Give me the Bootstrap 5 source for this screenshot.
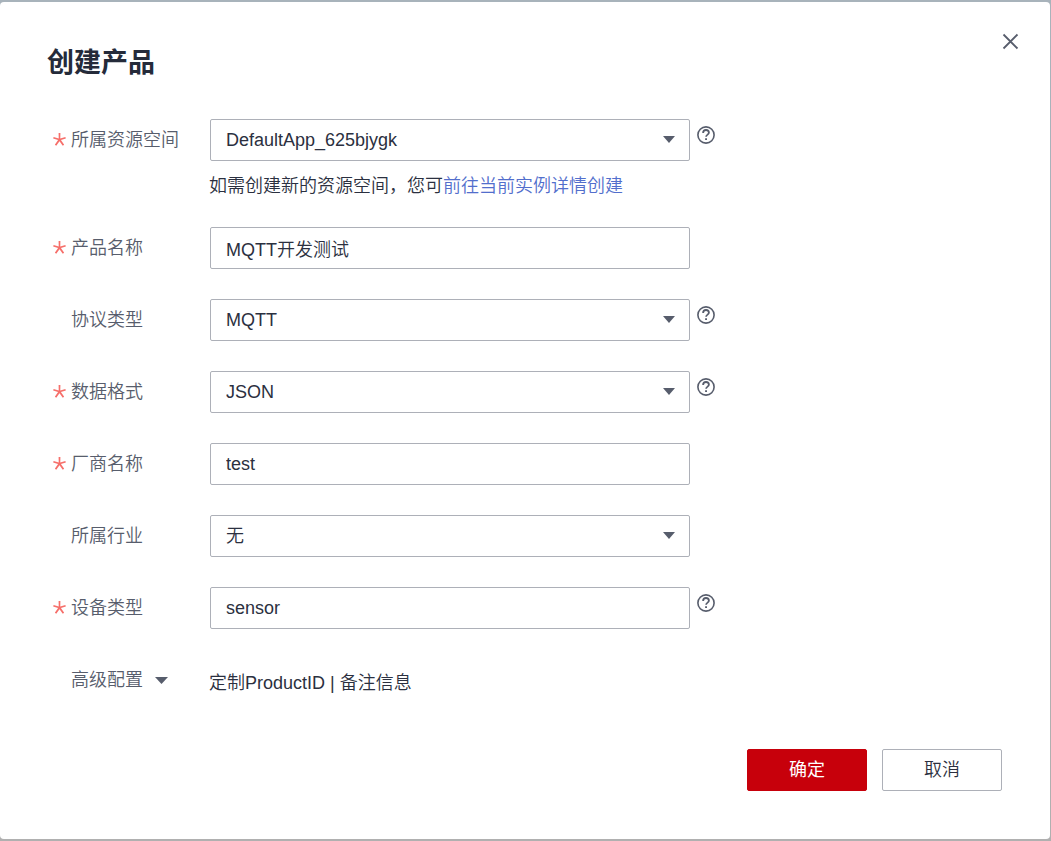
<!DOCTYPE html>
<html lang="zh-CN">
<head>
<meta charset="utf-8">
<meta name="viewport" content="width=device-width, initial-scale=1">
<title>创建产品</title>
<link href="https://cdn.jsdelivr.net/npm/bootstrap@5.3.0/dist/css/bootstrap.min.css" rel="stylesheet">
<style>
  :root { --ink: #2b3040; --label: #575d6c; --line: #adb0b8; }
  body {
    background: linear-gradient(#a8b3bb 0 50%, #b0b0b0 50%);
    color: var(--ink);
    font: 350 18px/26px "Liberation Sans", "Noto Sans CJK SC", sans-serif;
  }
  .plain { border: 0; background: none; padding: 0; font: inherit; color: inherit; }
  .dialog { margin: 2px 1px 2px 0; padding: 42px 48px 48px; border-radius: 4px; background: #fff; min-height: calc(100vh - 4px); position: relative; }
  .dialog-title { font-size: 27px; line-height: 38px; font-weight: 700; margin: 0 0 37px -1px; color: #252b3a; }
  .dialog-close { position: absolute; top: 31px; right: 31px; color: var(--label); line-height: 0; }
  .form-line { display: grid; grid-template-columns: 162px minmax(0, 480px) 18px; margin-bottom: 30px; }
  .form-line > .help { margin-left: 7px; margin-top: 7px; }
  .field-label { color: var(--label); padding: 8px 0 8px 23px; position: relative; }
  .required::before { content: ""; position: absolute; left: 5px; top: 14px; width: 13px; height: 13px; background: #f66f6a;
    clip-path: polygon(43% 0, 57% 0, 56% 42%, 95% 30%, 99% 42%, 61% 54%, 86% 90%, 75% 98%, 50% 64%, 25% 98%, 14% 90%, 39% 54%, 1% 42%, 5% 30%, 44% 42%); }
  .field-box, .field-box:focus { height: 42px; padding: 0 15px; border: 1px solid var(--line); border-radius: 2px; color: var(--ink);
    font-size: 18px; font-weight: 350; line-height: 26px; background-color: #fff; box-shadow: none; }
  .form-select.field-box { padding-right: 40px; background-position: right 14px top 16px; background-size: 12px 7px;
    background-image: url("data:image/svg+xml,%3Csvg xmlns='http://www.w3.org/2000/svg' viewBox='0 0 12 7'%3E%3Cpath fill='%23575d6c' d='M0 0h12L6 7z'/%3E%3C/svg%3E"); }
  .hint { margin: 12px 0 -2px -1px; }
  .hint a { color: #526ecc; text-decoration: none; }
  .summary { margin: 11px 0 0 -1px; }
  .help { color: var(--label); line-height: 0; width: 18px; height: 18px; }
  .help svg, .dialog-close svg { display: block; }
  .action { width: 120px; height: 42px; border-radius: 2px; font-size: 18px; line-height: 26px; padding: 0; }
  .action-ok, .action-ok:hover { background: #c7000b; border-color: #c7000b; color: #fff; font-weight: 400; }
  .action-cancel, .action-cancel:hover { background: #fff; border-color: var(--line); color: var(--ink); font-weight: 350; }
  .actions { gap: 15px; }
</style>
</head>
<body>
<svg class="d-none">
  <symbol id="help-icon" viewBox="0 0 18 18">
    <circle cx="9" cy="9" r="8.1" fill="none" stroke="currentColor" stroke-width="1.6"/>
    <path d="M6.100 7C6.100 5.100 7.300 4 9 4s2.900 1.100 2.900 2.700c0 1.900-2.800 2-2.800 4.100" fill="none" stroke="currentColor" stroke-width="1.8"/>
    <path d="M8.100 12.200h1.900v1.800H8.100z" fill="currentColor"/>
  </symbol>
</svg>
<main class="dialog d-flex flex-column" role="dialog" aria-labelledby="dialog-title">
  <h1 class="dialog-title" id="dialog-title">创建产品</h1>
  <button type="button" class="plain dialog-close" aria-label="关闭">
    <svg width="17" height="17" viewBox="0 0 17 17" fill="none" stroke="currentColor" stroke-width="1.8"><path d="M1.500 1.500l14 14M15.500 1.500l-14 14"/></svg>
  </button>
  <form id="product">
    <div class="form-line">
      <label class="field-label required" for="space">所属资源空间</label>
      <div>
        <select class="form-select field-box" id="space"><option>DefaultApp_625bjygk</option></select>
        <p class="hint">如需创建新的资源空间，您可<a href="#">前往当前实例详情创建</a></p>
      </div>
      <button type="button" class="plain help" aria-label="帮助"><svg width="18" height="18"><use href="#help-icon"/></svg></button>
    </div>
    <div class="form-line">
      <label class="field-label required" for="name">产品名称</label>
      <input class="form-control field-box" id="name" type="text" value="MQTT开发测试">
    </div>
    <div class="form-line">
      <label class="field-label" for="protocol">协议类型</label>
      <select class="form-select field-box" id="protocol"><option>MQTT</option></select>
      <button type="button" class="plain help" aria-label="帮助"><svg width="18" height="18"><use href="#help-icon"/></svg></button>
    </div>
    <div class="form-line">
      <label class="field-label required" for="format">数据格式</label>
      <select class="form-select field-box" id="format"><option>JSON</option></select>
      <button type="button" class="plain help" aria-label="帮助"><svg width="18" height="18"><use href="#help-icon"/></svg></button>
    </div>
    <div class="form-line">
      <label class="field-label required" for="vendor">厂商名称</label>
      <input class="form-control field-box" id="vendor" type="text" value="test">
    </div>
    <div class="form-line">
      <label class="field-label" for="industry">所属行业</label>
      <select class="form-select field-box" id="industry"><option>无</option></select>
    </div>
    <div class="form-line">
      <label class="field-label required" for="device">设备类型</label>
      <input class="form-control field-box" id="device" type="text" value="sensor">
      <button type="button" class="plain help" aria-label="帮助"><svg width="18" height="18"><use href="#help-icon"/></svg></button>
    </div>
    <div class="form-line">
      <button type="button" class="plain field-label d-flex align-items-center" aria-expanded="false">高级配置
        <svg class="ms-2" width="20" height="8" viewBox="0 0 20 8" fill="currentColor"><path d="M4 1h13l-6.500 7z"/></svg>
      </button>
      <p class="summary">定制ProductID | 备注信息</p>
    </div>
  </form>
  <div class="actions d-flex justify-content-end mt-auto">
    <button type="submit" form="product" class="btn action action-ok">确定</button>
    <button type="button" class="btn action action-cancel">取消</button>
  </div>
</main>
<script src="https://cdn.jsdelivr.net/npm/bootstrap@5.3.0/dist/js/bootstrap.bundle.min.js"></script>
</body>
</html>
